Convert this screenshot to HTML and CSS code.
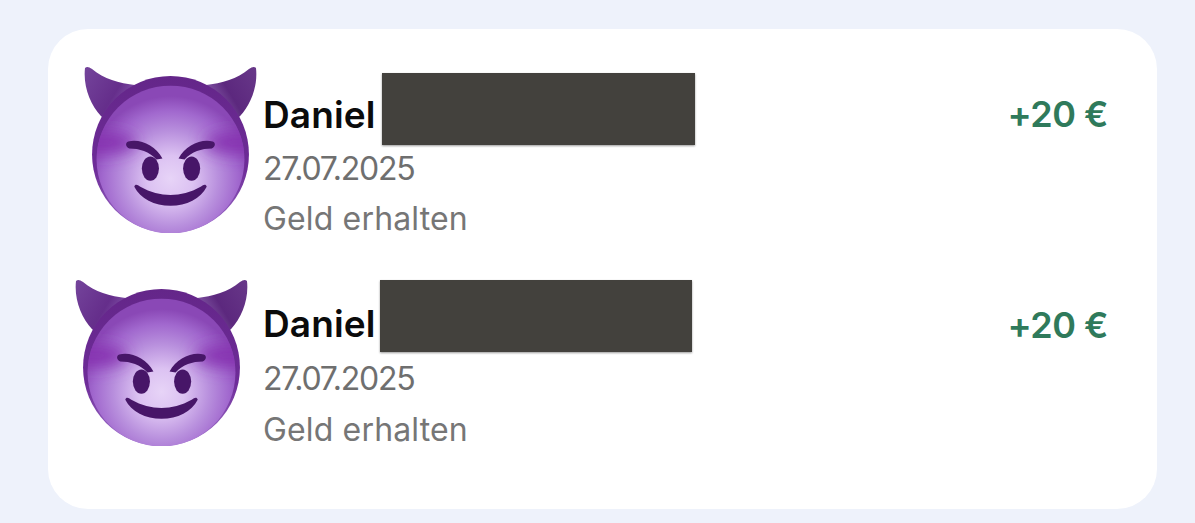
FILE: index.html
```html
<!DOCTYPE html>
<html lang="de">
<head>
<meta charset="utf-8">
<title>Transaktionen</title>
<link rel="stylesheet" href="styles.css">
</head>
<body>
<svg class="defs" width="0" height="0" aria-hidden="true">
  <defs>
    <radialGradient id="faceGrad" gradientUnits="userSpaceOnUse" cx="86" cy="112" r="82">
      <stop offset="0" stop-color="#e7d4f7"/>
      <stop offset="0.28" stop-color="#dcc2f2"/>
      <stop offset="0.58" stop-color="#b88fdd"/>
      <stop offset="0.82" stop-color="#a168ce"/>
      <stop offset="1" stop-color="#8a48b6"/>
    </radialGradient>
    <linearGradient id="rimGrad" x1="0" y1="0" x2="0" y2="1">
      <stop offset="0" stop-color="#642689"/>
      <stop offset="0.6" stop-color="#6e2c98"/>
      <stop offset="1" stop-color="#9c6ecb"/>
    </linearGradient>
    <linearGradient id="hornL" x1="0" y1="0" x2="1" y2="0.7">
      <stop offset="0" stop-color="#74449b"/>
      <stop offset="0.6" stop-color="#652e8b"/>
      <stop offset="1" stop-color="#8f62b6"/>
    </linearGradient>
    <linearGradient id="hornR" x1="1" y1="0" x2="0" y2="0.7">
      <stop offset="0" stop-color="#683889"/>
      <stop offset="0.55" stop-color="#5c287e"/>
      <stop offset="1" stop-color="#9670ba"/>
    </linearGradient>
    <filter id="soft" x="-40%" y="-100%" width="180%" height="300%">
      <feGaussianBlur stdDeviation="8"/>
    </filter>
    <clipPath id="faceClip"><circle cx="86" cy="93" r="73.5"/></clipPath>
    <symbol id="devil" viewBox="0 0 172 166">
      <path d="M1 2C3 0 5 1 8 3C20 13 34 17 52 19L32 60L17 50C6 38-1 20 1 2Z" fill="url(#hornL)"/>
      <path d="M171 2C169 0 167 1 164 3C152 13 138 17 120 19L140 60L155 50C166 38 173 20 171 2Z" fill="url(#hornR)"/>
      <circle cx="86" cy="88" r="78" fill="url(#rimGrad)"/>
      <circle cx="86" cy="93" r="73.5" fill="url(#faceGrad)"/>
      <g clip-path="url(#faceClip)">
        <ellipse cx="18" cy="76" rx="34" ry="11" fill="#8630b0" filter="url(#soft)"/>
        <ellipse cx="154" cy="76" rx="34" ry="11" fill="#8630b0" filter="url(#soft)"/>
      </g>
      <path d="M44 75C56 72 71 79 78 92L72 93C65 85 55 82 45 82C41 80 41 76 44 75Z" fill="#471668"/>
      <path d="M128 75C116 72 101 79 94 92L100 93C107 85 117 82 127 82C131 80 131 76 128 75Z" fill="#471668"/>
      <ellipse cx="66" cy="102" rx="8.5" ry="12" fill="#471668"/>
      <ellipse cx="107" cy="102" rx="8.5" ry="12" fill="#471668"/>
      <path d="M50 120C51 117 53 118 56 120C76 131 96 131 116 120C119 118 121 117 122 120C116 132 102 139 86 139C70 139 56 132 50 120Z" fill="#471668"/>
    </symbol>
  </defs>
</svg>
<main class="card">
  <section class="row">
    <svg class="avatar avatar-first" viewBox="0 0 172 166" aria-hidden="true"><use href="#devil"/></svg>
    <div class="info">
      <div class="name-line"><span class="name">Daniel</span><span class="redact"></span></div>
      <div class="date">27.07.2025</div>
      <div class="kind">Geld erhalten</div>
    </div>
    <div class="amount">+20 €</div>
  </section>
  <section class="row row-second">
    <svg class="avatar avatar-second" viewBox="0 0 172 166" aria-hidden="true"><use href="#devil"/></svg>
    <div class="info">
      <div class="name-line"><span class="name">Daniel</span><span class="redact"></span></div>
      <div class="date">27.07.2025</div>
      <div class="kind">Geld erhalten</div>
    </div>
    <div class="amount">+20 €</div>
  </section>
</main>
</body>
</html>
```
FILE: styles.css
```css
* { box-sizing: border-box; }
html, body { height: 100%; }
body {
  margin: 0;
  padding: 29px 38px 15px 48px;
  background: #eef2fb;
  font-family: Inter, "Liberation Sans", sans-serif;
  overflow: hidden;
}
.defs { display: block; position: absolute; }
.card {
  height: 480px;
  background: #fff;
  border-radius: 40px;
  padding: 37px 49px 0 27px;
  display: flex;
  flex-direction: column;
  gap: 41px;
}
.row {
  display: flex;
  align-items: flex-start;
  height: 166px;
}
.avatar {
  width: 173px;
  height: 167px;
  flex: none;
  margin-right: 15px;
}
.avatar-first {
  margin-left: 9px;
  margin-right: 6px;
}
.avatar-second { margin-top: 6px; }
.info { flex: 1; margin-top: 7px; }
.name-line {
  display: flex;
  align-items: flex-start;
  height: 72px;
}
.name {
  font-size: 37px;
  font-weight: 600;
  line-height: 44px;
  margin-top: 20px;
  color: #0b0b0b;
  letter-spacing: 0.1px;
}
.redact {
  width: 313px;
  height: 72px;
  margin-left: 7px;
  background: #43413d;
  box-shadow: 0 1px 2px #9a9a9a;
}
.date, .kind {
  font-size: 32px;
  line-height: 38px;
  color: #6f6f6f;
}
.date { margin-top: 5px; letter-spacing: -1.2px; }
.kind { margin-top: 12px; color: #767676; letter-spacing: 0.15px; }
.amount {
  font-size: 36px;
  font-weight: 600;
  line-height: 40px;
  color: #2f7a5b;
  margin-top: 28px;
  letter-spacing: -0.5px;
}
.row-second .name { margin-top: 22px; }
.row-second .redact { margin-left: 5px; width: 312px; }
.row-second .date { margin-top: 8px; }
.row-second .kind { margin-top: 13px; }
.row-second .amount { margin-top: 32px; }
```
